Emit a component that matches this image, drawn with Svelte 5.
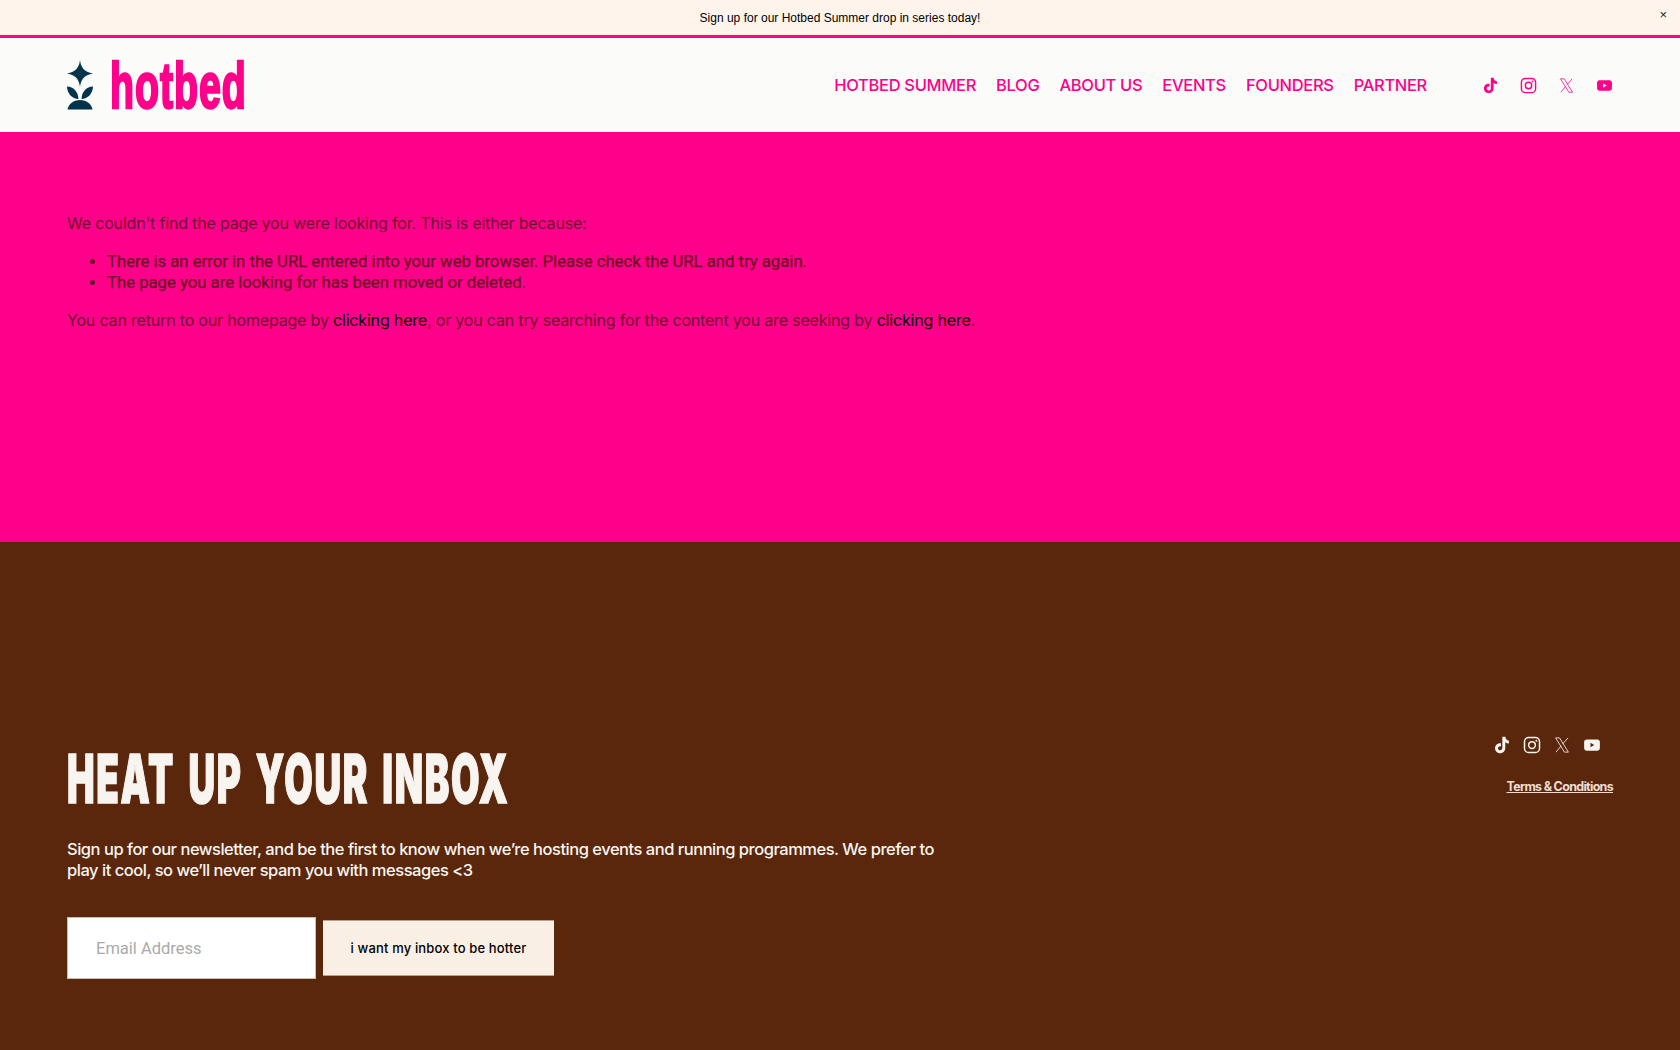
<script>
  const nav = ['HOTBED SUMMER', 'BLOG', 'ABOUT US', 'EVENTS', 'FOUNDERS', 'PARTNER'];
</script>

{#snippet socials(cls)}
  <div class="socials {cls}">
    <svg class="icon" viewBox="2 1 21 22" aria-hidden="true"><path d="M13.2 2h3.4c.3 2.600 1.800 4.400 4.400 4.700v3.500c-1.700 0-3.200-.5-4.500-1.500v6.900c0 3.900-3 6.400-6.300 6.400-3.500 0-6.200-2.700-6.200-6.100 0-3.800 3.300-6.700 7.300-6v3.600c-1.900-.5-3.700.6-3.700 2.400 0 1.500 1.200 2.600 2.600 2.600 1.600 0 2.700-1.100 2.700-3V2z" fill="currentColor"/></svg>
    <svg class="icon" viewBox="0 0 24 24" aria-hidden="true"><rect x="2" y="2" width="20" height="20" rx="5.500" fill="none" stroke="currentColor" stroke-width="2"/><circle cx="12" cy="12" r="4.500" fill="none" stroke="currentColor" stroke-width="2"/><circle cx="17.800" cy="6.200" r="1.300" fill="currentColor"/></svg>
    <svg class="icon" viewBox="0 0 24 24" aria-hidden="true"><path d="M3.500 2.500h5.200l11.800 19h-5.200zM20 2.500l-7.200 8.300M10.800 13.200 4 21.500" fill="none" stroke="currentColor" stroke-width="1.100"/></svg>
    <svg class="icon" viewBox="0 0 24 24" aria-hidden="true"><path fill-rule="evenodd" d="M5 4.500h14c2 0 3.500 1.500 3.500 3.500v8c0 2-1.500 3.500-3.500 3.500H5c-2 0-3.500-1.500-3.500-3.500V8C1.500 6 3 4.500 5 4.500zM10 9v6l5-3z" fill="currentColor"/></svg>
  </div>
{/snippet}

<div class="page">
  <div class="banner">
    <span>Sign up for our Hotbed Summer drop in series today!</span>
    <span class="close">×</span>
  </div>

  <header class="header">
    <div class="logo">
      <svg class="mark" viewBox="0 0 26 50" aria-hidden="true">
        <path d="M13 0c.9 7.500 4 11.800 13 13.500-9 1.700-12.100 6-13 13.500-.9-7.500-4-11.800-13-13.500C9 11.800 12.100 7.500 13 0z" fill="#04334a"/>
        <path d="M0 26.500c6.500.5 11 4.500 11.500 12.500C5 38.500.3 34 0 26.500zM26 26.500c-6.500.5-11 4.500-11.500 12.500 6.500-.5 11.200-5 11.500-12.500z" fill="#04334a"/>
        <path d="M.5 49.500C1.500 44 6.500 40 13 40s11.500 4 12.500 9.500z" fill="#04334a"/>
      </svg>
      <span class="wordmark"><span>hotbed</span></span>
    </div>
    <nav class="nav">
      {#each nav as item}
        <a href="#top">{item}</a>
      {/each}
    </nav>
    {@render socials('top-socials')}
  </header>

  <main class="error">
    <p>We couldn't find the page you were looking for. This is either because:</p>
    <ul>
      <li>There is an error in the URL entered into your web browser. Please check the URL and try again.</li>
      <li>The page you are looking for has been moved or deleted.</li>
    </ul>
    <p>You can return to our homepage by <a href="#top">clicking here</a>, or you can try searching for the content you are seeking by <a href="#top">clicking here</a>.</p>
  </main>

  <footer class="footer">
    <div class="signup">
      <h2><span>HEAT UP YOUR INBOX</span></h2>
      <p class="lede">Sign up for our newsletter, and be the first to know when we’re hosting events and running programmes. We prefer to play it cool, so we’ll never spam you with messages &lt;3</p>
      <form class="form">
        <input type="email" placeholder="Email Address" />
        <button type="button">i want my inbox to be hotter</button>
      </form>
    </div>
    <div class="side">
      {@render socials('foot-socials')}
      <a class="terms" href="#top">Terms &amp; Conditions</a>
    </div>
  </footer>
</div>

<style>
  :global(body) { margin: 0; background: #5a270c; }
  .page { height: 1050px; display: flex; flex-direction: column; overflow: hidden; font-family: Inter, "Liberation Sans", sans-serif; }

  .banner { height: 35px; flex: none; background: #fff4eb; border-bottom: 3px solid #ff008a; display: flex; align-items: center; justify-content: center; position: relative; font-size: 12px; color: #000; font-family: "Liberation Sans", sans-serif; }
  .close { position: absolute; right: 13px; top: 7px; font-size: 13px; line-height: 16px; color: #222; }

  .header { height: 94px; flex: none; background: #fbfbf9; display: flex; align-items: center; padding: 0 67px; box-sizing: border-box; }
  .logo { display: flex; align-items: center; gap: 17px; }
  .mark { width: 26px; height: 50px; display: block; }
  .wordmark { width: 134px; height: 50px; display: block; overflow: visible; }
  .wordmark span { display: block; font: 700 64px/50px "Liberation Sans", sans-serif; color: #ff008a; transform: scaleX(.615); transform-origin: left center; -webkit-text-stroke: 2.500px #ff008a; letter-spacing: 1.500px; padding-top: 1px; }
  .nav { margin-left: auto; display: flex; gap: 20px; font-size: 16.500px; font-weight: 500; letter-spacing: -.32px; }
  .nav a { color: #ff008a; text-decoration: none; }
  .socials { display: flex; }
  .icon { display: block; }
  .top-socials { margin-left: 55px; gap: 21px; color: #ff008a; }
  .top-socials .icon { width: 17px; height: 17px; }

  .error { height: 410px; flex: none; background: #ff008a; padding: 81px 67px 0; box-sizing: border-box; color: #6d0f2c; font-size: 16px; line-height: 21px; letter-spacing: -.18px; }
  .error p { margin: 0; }
  .error ul { margin: 17px 0; padding-left: 40px; }
  .error li { color: #6a1222; font-family: Roboto, sans-serif; font-size: 16.700px; letter-spacing: 0; -webkit-text-stroke: .25px #6a1222; }
  .error a { color: #000; text-decoration: none; }

  .footer { flex: 1; background: #5a270c; padding: 0 67px; display: flex; justify-content: space-between; align-items: flex-start; color: #f8f5f1; }
  .signup { width: 885px; padding-top: 207px; }
  h2 { margin: 0; height: 62px; }
  h2 span { display: block; width: 760px; font: 900 67px/60px Inter, sans-serif; color: #f8f5f1; transform: scaleX(.55); transform-origin: left center; white-space: nowrap; -webkit-text-stroke: 1.500px #f8f5f1; letter-spacing: 3px; word-spacing: 8px; }
  .lede { margin: 28px 0 0; font-size: 16.500px; line-height: 21px; font-weight: 500; color: #f8f5f1; letter-spacing: -.48px; }
  .form { display: flex; align-items: center; gap: 7px; margin-top: 36px; }
  input { width: 249px; height: 62px; box-sizing: border-box; border: 1px solid #c9bdb6; padding: 0 28px; background: #fff; font: 16.500px Roboto, sans-serif; border-radius: 0; outline: none; }
  input::placeholder { color: #aaa; opacity: 1; }
  button { width: 231px; height: 56px; border: 0; border-top: 1px solid #b89f90; border-bottom: 1px solid #b89f90; background: #f9efe5; color: #000; font: 500 13px Inter, sans-serif; letter-spacing: .15px; padding: 0; }

  .side { display: flex; flex-direction: column; align-items: flex-end; padding-top: 194px; }
  .foot-socials { gap: 12px; color: #f8f5f1; margin-right: 12px; }
  .foot-socials .icon { width: 18px; height: 18px; }
  .terms { margin-top: 25px; font-size: 12.500px; font-weight: 700; color: #f1ddd0; text-decoration: underline; letter-spacing: -.7px; }
</style>
